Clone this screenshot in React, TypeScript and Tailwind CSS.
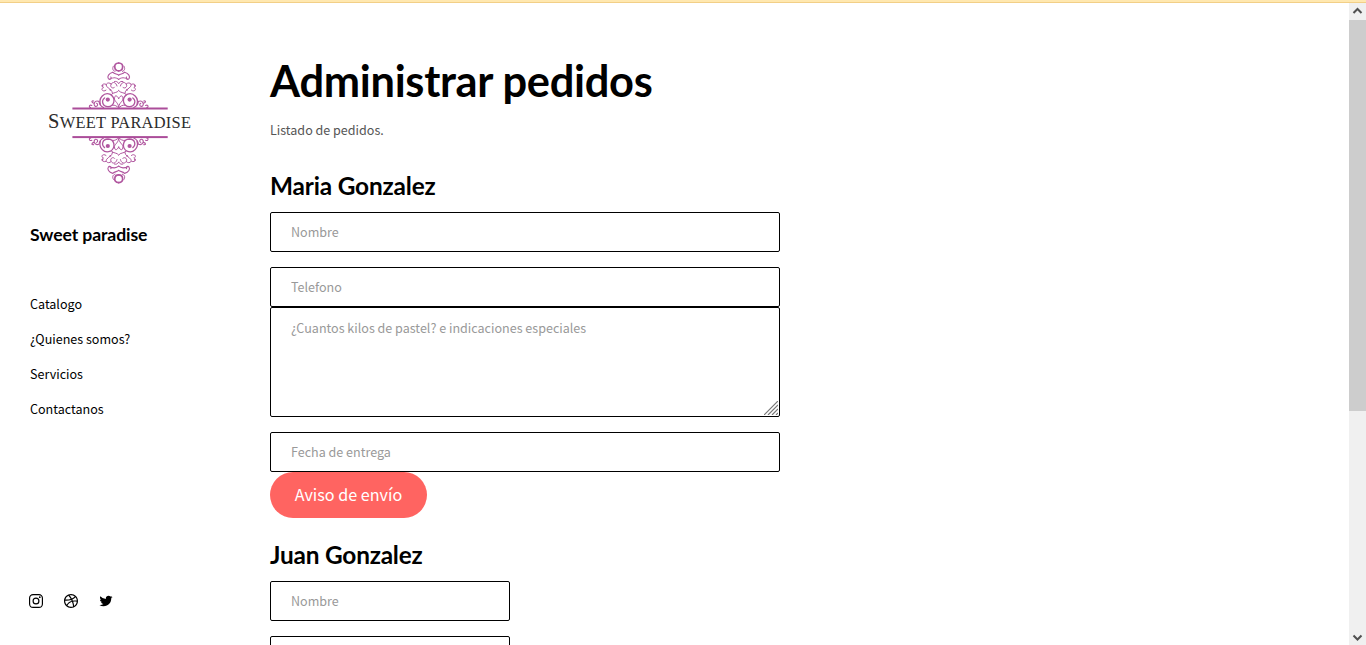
import { IoLogoDribbble, IoLogoInstagram, IoLogoTwitter } from 'react-icons/io5';

function Quarter() {
  return (
    <g fill="none" stroke="#b0569f" strokeWidth="1" strokeLinecap="round">
      <path d="M78.7 8C75.6 8 74.4 10 74.8 12.2C75 14.6 76.6 15.8 78.7 15.8" strokeWidth="1.7" />
      <path d="M73.4 11.2C72.2 13.4 72.4 15.6 75 16.4" />
      <path d="M72.8 17.2C68.6 18.4 67 21.6 68.4 23.6C70 25.2 72 23.6 70.8 22M69.2 24.2C72.4 22.6 76 22 78.7 24.4M72.8 17.2C74.6 19.4 77 18.6 78.7 20.2" strokeWidth="1.1" />
      <path d="M77 31C76 27.2 73 26.4 71.2 29C69.4 32 73 34.4 74.6 32.2M71.2 29C69 26.6 65 28.4 66.6 31.2C68.4 34 72.4 34.6 72.6 38.4" />
      <path d="M65.8 29.2C62 27.8 60.6 31.6 63.4 32.6M66 35.2C63.4 37.4 60.2 34.6 62.8 32.8" />
      <path d="M78.7 35.6C77 38.4 73.6 36.8 71.4 39.4M78.7 28.4C77.4 26.4 76 26 74.4 26.6" />
      <path d="M60.4 49.6C58.4 43 64 36.6 70.4 39.4C76.2 43.2 74.6 51.4 68 51.6C62.4 51.6 61 45.6 64.6 43" strokeWidth="1.3" />
      <circle cx="67.8" cy="44.6" r="2.1" fill="#b0569f" stroke="none" />
      <path d="M78.7 51.8C77.8 46.4 73.6 46.6 74.6 42.6C75 39.6 77.6 40.8 78.7 43.6M72.6 50.2C75 49.8 76.8 51 78.7 53" />
      <path d="M59 46.4C54.4 44.6 52.6 50.2 55.6 51.4C57.8 51.6 58.4 48.8 56.6 48.2M59 46.4C59.4 49.6 61 51.4 63.6 52.6" strokeWidth="1.1" />
      <path d="M51.8 50.4C48.8 49 48.8 53 50.6 52.4M54 48.2C51.2 47.6 51.4 45.4 53.6 46" strokeWidth="1.1" />
      <circle cx="70.4" cy="34.8" r="0.9" fill="#b0569f" stroke="none" />
      <circle cx="62.6" cy="30.8" r="0.9" fill="#b0569f" stroke="none" />
    </g>
  );
}

function Half() {
  return (
    <g>
      <Quarter />
      <g transform="translate(157.4 0) scale(-1 1)">
        <Quarter />
      </g>
      <rect x="32.4" y="52.5" width="95.3" height="2" fill="#ab4d9a" />
    </g>
  );
}

function Logo() {
  return (
    <svg width="160" height="135" viewBox="0 0 160 135" className="ml-[10px] block" role="img">
      <Half />
      <g transform="translate(0 135.6) scale(1 -1)">
        <Half />
      </g>
      <text
        x="8"
        y="73.3"
        textLength="143"
        lengthAdjust="spacing"
        fill="#2c2c2c"
        fontFamily="'Liberation Serif', serif"
        fontSize="16.4"
      >
        <tspan fontSize="20.5">S</tspan>WEET PARADISE
      </text>
    </svg>
  );
}

const fieldClass =
  'block w-full rounded-[2px] border border-black bg-white px-5 text-[12.56px] text-black outline-none placeholder:text-[#999] placeholder:opacity-100';

function Field({ placeholder }: { placeholder: string }) {
  return <input type="text" placeholder={placeholder} className={`${fieldClass} h-10 pb-[2px]`} />;
}

function Message() {
  return (
    <div className="relative">
      <textarea
        placeholder="¿Cuantos kilos de pastel? e indicaciones especiales"
        className={`${fieldClass} h-[110px] resize-none pt-[9px] leading-[21px]`}
      />
      <svg className="absolute right-[2px] bottom-[2px]" width="14" height="14" viewBox="0 0 14 14" stroke="#777" strokeWidth="1.2">
        <path d="M0 14L14 0M4 14L14 4M8 14L14 8M12 14L14 12" />
      </svg>
    </div>
  );
}

const links = ['Catalogo', '¿Quienes somos?', 'Servicios', 'Contactanos'];

function Sidebar() {
  return (
    <aside className="flex w-[240px] shrink-0 flex-col pt-[52px] pl-[30px]">
      <Logo />
      <h2 className="mt-[33px] font-['Lato',sans-serif] text-[17.6px] leading-6 font-bold tracking-[-0.1px]">Sweet paradise</h2>
      <nav className="mt-[39px] flex flex-col">
        {links.map((label) => (
          <a key={label} href="#" className="h-[35px] text-[12.56px] leading-[35px]">
            {label}
          </a>
        ))}
      </nav>
      <div className="mt-[167px] -ml-[2px] flex items-center">
        <IoLogoInstagram size={16} />
        <IoLogoDribbble size={16} className="ml-[19px]" />
        <IoLogoTwitter size={14} className="ml-[20px]" />
      </div>
    </aside>
  );
}

function Scrollbar() {
  return (
    <div className="flex w-[17px] shrink-0 flex-col items-center bg-[#f0f0f0]">
      <svg width="17" height="17" viewBox="0 0 17 17" fill="none" stroke="#505050" strokeWidth="2">
        <path d="M4.5 10L8.5 6L12.5 10" />
      </svg>
      <div className="h-[391px] w-full bg-[#cdcdcd]" />
      <svg className="mt-auto" width="17" height="17" viewBox="0 0 17 17" fill="none" stroke="#505050" strokeWidth="2">
        <path d="M4.5 7.5L8.5 11.5L12.5 7.5" />
      </svg>
    </div>
  );
}

export default function App() {
  return (
    <div className="flex h-[645px] flex-col overflow-hidden bg-white font-['Noto_Sans_CJK_SC',sans-serif] text-black">
      <div className="h-[3px] shrink-0 border-b border-[#f2cf87] bg-[#ffe8b0]" />
      <div className="flex min-h-0 flex-1">
        <Sidebar />
        <main className="min-w-0 flex-1 overflow-hidden pt-[48px] pl-[30px]">
          <h1 className="font-['Lato',sans-serif] text-[43.4px] leading-[58px] font-bold tracking-[-0.3px]">Administrar pedidos</h1>
          <p className="mt-[10px] text-[12.56px] leading-[21px] text-[#555]">Listado de pedidos.</p>
          <section className="mt-[30px] w-[510px]">
            <h2 className="font-['Lato',sans-serif] text-[24.4px] leading-8 font-bold tracking-[-0.17px]">Maria Gonzalez</h2>
            <div className="mt-[10px] flex flex-col">
              <Field placeholder="Nombre" />
              <div className="mt-[15px]">
                <Field placeholder="Telefono" />
              </div>
              <Message />
              <div className="mt-[15px]">
                <Field placeholder="Fecha de entrega" />
              </div>
            </div>
            <button className="block h-[46px] w-[157px] rounded-full bg-[#ff6461] pb-[2px] text-[16.15px] leading-[44px] text-white">
              Aviso de envío
            </button>
          </section>
          <section className="mt-[21px] w-[240px]">
            <h2 className="font-['Lato',sans-serif] text-[24.4px] leading-8 font-bold tracking-[-0.2px]">Juan Gonzalez</h2>
            <div className="mt-[10px] flex flex-col gap-[15px]">
              <Field placeholder="Nombre" />
              <Field placeholder="Telefono" />
            </div>
          </section>
        </main>
        <Scrollbar />
      </div>
    </div>
  );
}
